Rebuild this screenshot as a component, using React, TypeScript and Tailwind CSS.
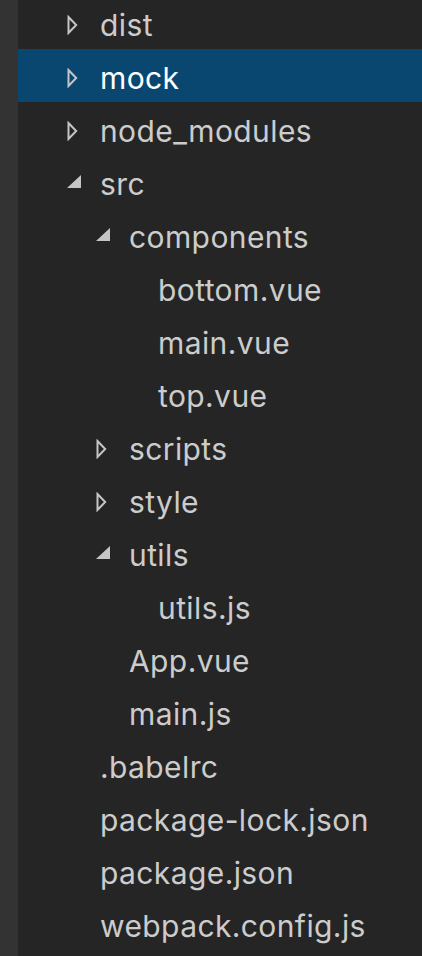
type Kind = "closed" | "open" | "file";

type Row = {
  name: string;
  level: 0 | 1 | 2;
  kind: Kind;
  selected?: boolean;
};

const rows: Row[] = [
  { name: "dist", level: 0, kind: "closed" },
  { name: "mock", level: 0, kind: "closed", selected: true },
  { name: "node_modules", level: 0, kind: "closed" },
  { name: "src", level: 0, kind: "open" },
  { name: "components", level: 1, kind: "open" },
  { name: "bottom.vue", level: 2, kind: "file" },
  { name: "main.vue", level: 2, kind: "file" },
  { name: "top.vue", level: 2, kind: "file" },
  { name: "scripts", level: 1, kind: "closed" },
  { name: "style", level: 1, kind: "closed" },
  { name: "utils", level: 1, kind: "open" },
  { name: "utils.js", level: 2, kind: "file" },
  { name: "App.vue", level: 1, kind: "file" },
  { name: "main.js", level: 1, kind: "file" },
  { name: ".babelrc", level: 0, kind: "file" },
  { name: "package-lock.json", level: 0, kind: "file" },
  { name: "package.json", level: 0, kind: "file" },
  { name: "webpack.config.js", level: 0, kind: "file" },
];

const indent = ["pl-[49px]", "pl-[78px]", "pl-[107px]"];

function Twistie({ kind }: { kind: Kind }) {
  if (kind === "closed") {
    return (
      <svg width="11" height="20" viewBox="0 0 11 20" className="mt-[4px]">
        <polygon
          points="1.5,2 9.2,10 1.5,18"
          fill="none"
          stroke="#c5c5c5"
          strokeWidth="2"
        />
      </svg>
    );
  }
  if (kind === "open") {
    return (
      <svg width="14" height="13" viewBox="0 0 14 13">
        <polygon points="14,0 14,13 0,13" fill="#c5c5c5" />
      </svg>
    );
  }
  return null;
}

export default function App() {
  return (
    <div className="flex h-[956px] w-[422px] overflow-hidden bg-[#252526]">
      {/* activity bar edge */}
      <div className="w-[18px] shrink-0 bg-[#333333]" />

      {/* explorer tree */}
      <div className="flex-1 -mt-[4px] font-['Inter',sans-serif]">
        {rows.map((row) => (
          <div
            key={row.name + row.level}
            className={`flex h-[53px] items-center ${indent[row.level]} ${
              row.selected ? "bg-[#094771] text-white" : "text-[#cccccc]"
            }`}
          >
            <div className="flex w-[33px] shrink-0 items-center">
              <Twistie kind={row.kind} />
            </div>
            <span className="pt-[4px] text-[30px] leading-none tracking-[0.4px] whitespace-nowrap">
              {row.name}
            </span>
          </div>
        ))}
      </div>
    </div>
  );
}
